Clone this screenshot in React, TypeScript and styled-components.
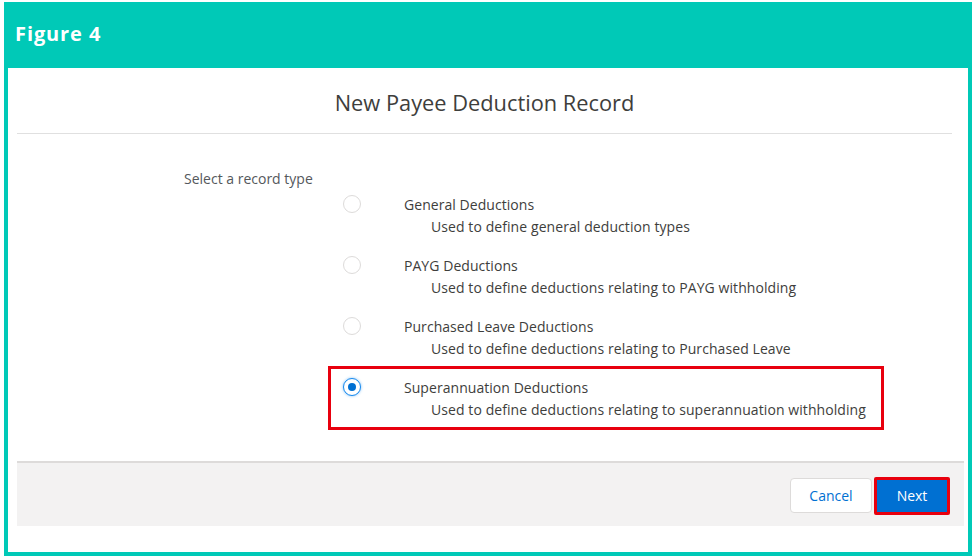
import styled, { createGlobalStyle } from "styled-components";

const GlobalStyle = createGlobalStyle`
  html, body {
    margin: 0;
    padding: 0;
    background: #ffffff;
  }
  body {
    font-family: "Open Sans", "Noto Sans", Arial, sans-serif;
  }
`;

type RecordType = {
  name: string;
  description: string;
  selected?: boolean;
};

const recordTypes: RecordType[] = [
  { name: "General Deductions", description: "Used to define general deduction types" },
  { name: "PAYG Deductions", description: "Used to define deductions relating to PAYG withholding" },
  {
    name: "Purchased Leave Deductions",
    description: "Used to define deductions relating to Purchased Leave",
  },
  {
    name: "Superannuation Deductions",
    description: "Used to define deductions relating to superannuation withholding",
    selected: true,
  },
];

const App: React.FC = () => {
  return (
    <>
      <GlobalStyle />
      <Frame>
        <FigureBar>Figure 4</FigureBar>
        <Body>
          <ModalHeader>
            <Title>New Payee Deduction Record</Title>
          </ModalHeader>
          <ModalContent>
            <FieldLabel>Select a record type</FieldLabel>
            <OptionList>
              {recordTypes.map((t) => (
                <Option key={t.name} $highlight={!!t.selected}>
                  <OptionTop>
                    <Radio $checked={!!t.selected} />
                    <OptionName>{t.name}</OptionName>
                  </OptionTop>
                  <OptionDescription>{t.description}</OptionDescription>
                </Option>
              ))}
            </OptionList>
          </ModalContent>
          <Footer>
            <CancelButton>Cancel</CancelButton>
            <NextButton>Next</NextButton>
          </Footer>
        </Body>
      </Frame>
    </>
  );
};

const Frame = styled.div`
  margin: 2px 0 0 4px;
  width: 960px;
  border: 4px solid #00c9b7;
  border-top: none;
  background: #ffffff;
`;

const FigureBar = styled.div`
  height: 66px;
  margin: 0 -4px;
  padding: 21px 0 0 11px;
  box-sizing: border-box;
  background: #00c9b7;
  color: #ffffff;
  font-family: "Open Sans", Arial, sans-serif;
  font-weight: 700;
  font-size: 20px;
  line-height: 22px;
  letter-spacing: 0.9px;
`;

const Body = styled.div`
  padding: 0 4px 26px 9px;
`;

const ModalHeader = styled.div`
  display: flex;
  align-items: center;
  justify-content: center;
  height: 65px;
  margin-right: 12px;
  border-bottom: 1px solid #e0e0e0;
`;

const Title = styled.h2`
  margin: 0;
  padding-top: 4px;
  font-weight: 400;
  font-size: 21.8px;
  color: #3e3e3c;
`;

const ModalContent = styled.div`
  padding: 38px 0 34px 167px;
`;

const FieldLabel = styled.div`
  font-size: 14px;
  line-height: 14px;
  color: #54585c;
`;

const OptionList = styled.div`
  display: flex;
  flex-direction: column;
  gap: 3px;
  margin-left: 147px;
  width: 550px;
`;

const Option = styled.div<{ $highlight: boolean }>`
  height: 58px;
  box-sizing: border-box;
  padding: 9px 0 0 12px;
  outline: ${(p) => (p.$highlight ? "3px solid #e8000e" : "none")};
`;

const OptionTop = styled.div`
  display: flex;
  align-items: center;
  gap: 43px;
  height: 18px;
`;

const Radio = styled.span<{ $checked: boolean }>`
  width: 18px;
  height: 18px;
  box-sizing: border-box;
  border-radius: 50%;
  border: 1px solid ${(p) => (p.$checked ? "#1589ee" : "#dddbda")};
  background: #ffffff;
  display: flex;
  align-items: center;
  justify-content: center;
  box-shadow: ${(p) => (p.$checked ? "0 0 3px #7fbef5" : "none")};

  &::after {
    content: "";
    display: ${(p) => (p.$checked ? "block" : "none")};
    width: 8px;
    height: 8px;
    border-radius: 50%;
    background: #0070d2;
  }
`;

const OptionName = styled.span`
  font-size: 14px;
  color: #3e3e3c;
  letter-spacing: 0.05px;
`;

const OptionDescription = styled.div`
  margin: 5px 0 0 88px;
  font-size: 14px;
  line-height: 18px;
  letter-spacing: 0.08px;
  color: #3e3e3c;
`;

const Footer = styled.div`
  display: flex;
  justify-content: flex-end;
  align-items: center;
  gap: 2px;
  height: 65px;
  box-sizing: border-box;
  padding: 2px 14px 0 0;
  background: #f3f2f2;
  border-top: 2px solid #dddbda;
`;

const BaseButton = styled.button`
  font-family: "Open Sans", Arial, sans-serif;
  font-size: 14px;
  border-radius: 4px;
  cursor: pointer;
`;

const CancelButton = styled(BaseButton)`
  width: 82px;
  height: 35px;
  background: #ffffff;
  border: 1px solid #dddbda;
  color: #0070d2;
`;

const NextButton = styled(BaseButton)`
  width: 76px;
  height: 38px;
  background: #0070d2;
  color: #ffffff;
  border: 3px solid #e8000e;
  border-radius: 2px;
`;

export default App;
